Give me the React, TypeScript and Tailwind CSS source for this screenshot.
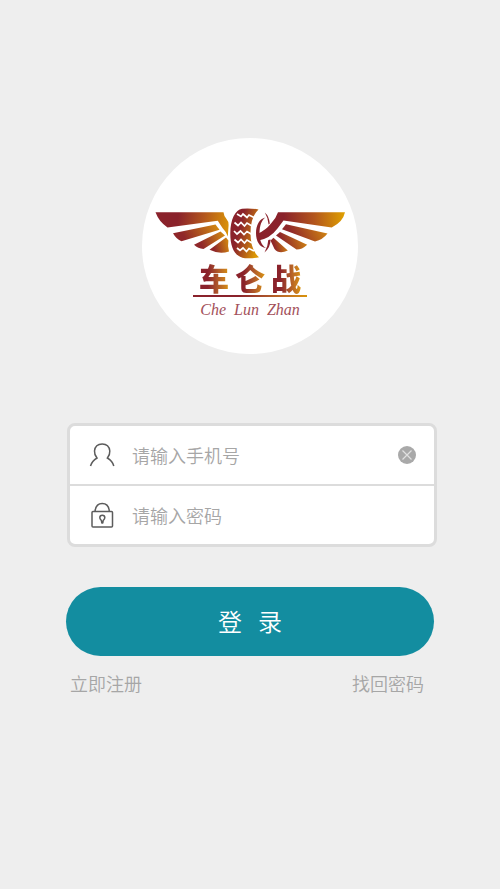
import React, { useState } from 'react';

const WingLogo: React.FC = () => (
  <svg viewBox="154 206 193 54" className="h-[54px] w-[193px]" aria-hidden="true">
    <defs>
      <linearGradient id="leftWing" gradientUnits="userSpaceOnUse" x1="156" y1="215" x2="229" y2="225">
        <stop offset="0.3" stopColor="#8a222b" />
        <stop offset="0.65" stopColor="#b3561d" />
        <stop offset="1" stopColor="#da9308" />
      </linearGradient>
      <linearGradient id="feather" x1="0" y1="0.6" x2="1" y2="0.4">
        <stop offset="0.2" stopColor="#8f272a" />
        <stop offset="1" stopColor="#d18611" />
      </linearGradient>
      <linearGradient id="tyre" gradientUnits="userSpaceOnUse" x1="231" y1="230" x2="260" y2="238">
        <stop offset="0.25" stopColor="#8a222b" />
        <stop offset="1" stopColor="#dc9805" />
      </linearGradient>
      <linearGradient id="rightWing" gradientUnits="userSpaceOnUse" x1="258" y1="225" x2="345" y2="218">
        <stop offset="0.3" stopColor="#8a222b" />
        <stop offset="0.65" stopColor="#b3561d" />
        <stop offset="1" stopColor="#dfa000" />
      </linearGradient>
    </defs>

    {/* left wing */}
    <path
      fill="url(#leftWing)"
      d="M155.5 212.3H223.5Q223.8 216 226.5 219Q228.8 221.5 228.6 225L227.8 236.5Q226.5 232 222.5 228L217.8 220.8L167.5 227.4Q159 222 155.5 212.3Z"
    />
    <path fill="url(#feather)" d="M173 233.3L215.5 224.4L219.5 229.8L181.5 241.2Q176.5 239.5 173 233.3Z" />
    <path fill="url(#feather)" d="M194 244.8L220.5 231.4L225 235.6L203.5 249Q198 248.5 194 244.8Z" />
    <path fill="url(#feather)" d="M209.5 249.8L226 237.5L228.4 240.5Q227.4 246 229 251.5Q219 254.5 209.5 249.8Z" />

    {/* tyre with its tread */}
    <path
      fill="url(#tyre)"
      d="M258.5 209.5Q250.5 217 250.5 233Q250.5 250 259 257.2Q252 258.8 245 258.2C235 257 230.3 248 230.3 233.5C230.3 219 235.5 210 242 208.8Q250 208 258.5 209.5Z"
    />
    <g fill="none" stroke="#fff" strokeWidth="1.7">
      <path d="M237 214L241 216.5L243 214L247 217.5L249 215L254 217.5" />
      <path d="M234.500 222.500L238 225.500L241 222.500L244.500 226L247 223L252 226" />
      <path d="M234 231L237 234L240.500 231L244 234.500L247 231.500L252 234.500" />
      <path d="M234.500 239.500L238 242.500L241 239.500L244.500 243L247 240L252 243" />
      <path d="M237 248L240 250.500L243 248L246.500 251.500L249 248.500L254 251" />
    </g>

    {/* rim and the thin outer edge */}
    <path
      fill="#8a222b"
      d="M265.500 217.500C259.500 218.500 256 225.500 256 233C256 241 259.500 247.500 266 248C261.500 245.500 259.500 240 259.500 233C259.500 226 261.500 220 265.500 217.500Z"
    />
    <path
      fill="#8a222b"
      d="M264.800 212.500Q269 216 269.800 223.500L268.600 224.500Q268 217.500 264.800 212.500ZM268.300 240L270.600 239.500Q270.500 247.500 264.500 252.500Q268 246.500 268.300 240Z"
    />

    {/* right wing, its root is a spoke of the rim */}
    <path
      fill="url(#rightWing)"
      d="M278 212.300H345Q343 222 331.700 227.500L283.500 220.600L277.500 228.500Q270 238.500 258.500 240.500L258 233.500Q266 230 271 223.500Q276 218.500 278 212.300Z"
    />
    <path fill="url(#feather)" d="M286 224.200L327.500 233.500Q323 239.500 315 241.500L282 229.300Z" />
    <path fill="url(#feather)" d="M280 232L307.200 244.700Q302 249.500 296.500 249.600L276 235.500Z" />
    <path fill="url(#feather)" d="M273.500 237.700L287.800 250.500Q279 254.500 274.500 249L270.500 240.500Z" />
  </svg>
);

const UserIcon: React.FC = () => (
  <svg viewBox="0 0 26 26" className="size-[26px] shrink-0" fill="none" stroke="#5c5c5c" strokeWidth="1.5" aria-hidden="true">
    <path d="M1.500 24Q3 19 8 16C6 13.500 5.300 11.500 5.500 9C6 4.500 9 2 13.200 2S20.300 4.500 20.800 9C21 11.500 20.400 13.500 18.400 16Q23.500 19 24.800 24" />
  </svg>
);

const LockIcon: React.FC = () => (
  <svg viewBox="0 0 26 26" className="size-[26px] shrink-0" fill="none" stroke="#5c5c5c" strokeWidth="1.5" aria-hidden="true">
    <rect x="3" y="9.500" width="20.500" height="15.500" rx="1" />
    <path d="M6 9.500C6.500 4.500 9.200 1.500 13.200 1.500S20 4.500 20.300 9.500" />
    <path strokeLinejoin="round" d="M12.400 18.500Q10.800 16.800 10.800 15.800A2.500 2.500 0 0 1 15.800 15.800Q15.800 16.800 14.200 18.500L13.800 21H12.800Z" />
  </svg>
);

const App: React.FC = () => {
  const [phone, setPhone] = useState('');
  const [password, setPassword] = useState('');

  return (
    <div className="min-h-screen bg-[#eeeeee] px-[66px] pt-[138px] font-['Noto_Sans_CJK_SC',sans-serif] font-[350]">
      <div className="mx-auto flex size-[216px] flex-col items-center rounded-full bg-white pt-[68px]">
        <WingLogo />
        <h1 className="flex gap-1.5 text-[30px] leading-[35px] font-black">
          <span className="bg-linear-to-r from-[#8a222b] from-30% to-[#d99308] bg-clip-text text-transparent">车</span>
          <span className="bg-linear-to-r from-[#8a222b] from-30% to-[#d99308] bg-clip-text text-transparent">仑</span>
          <span className="bg-linear-to-r from-[#8a222b] from-30% to-[#d99308] bg-clip-text text-transparent">战</span>
        </h1>
        <div className="h-0.5 w-[114px] bg-linear-to-r from-[#8a222b] from-40% to-[#d99308]" />
        <p className="mt-1 flex gap-2 font-['Liberation_Serif',serif] text-[16px] leading-[18px] font-normal text-[#a3505a] italic">
          <span>Che</span>
          <span>Lun</span>
          <span>Zhan</span>
        </p>
      </div>

      <form onSubmit={(e) => e.preventDefault()}>
        <div className="mt-[69px] -mr-[3px] ml-px rounded-lg border-3 border-[#dcdcdc] bg-white">
          <label className="flex h-[60px] items-center gap-[17px] border-b-2 border-[#dcdcdc] pr-[18px] pl-[19px]">
            <UserIcon />
            <input
              type="tel"
              value={phone}
              onChange={(e) => setPhone(e.target.value)}
              placeholder="请输入手机号"
              aria-label="手机号"
              className="min-w-0 flex-1 text-[18px] text-[#555555] outline-none placeholder:text-[#a6a6a6]"
            />
            <button
              type="button"
              aria-label="清除"
              onClick={() => setPhone('')}
              className="flex size-[18px] items-center justify-center rounded-full bg-[#a9a9a9]"
            >
              <svg viewBox="0 0 18 18" className="size-[18px]" stroke="#e0e0e0" strokeWidth="1.2" aria-hidden="true">
                <path d="M4.500 4.500L13.500 13.500M13.500 4.500L4.500 13.500" />
              </svg>
            </button>
          </label>
          <label className="flex h-[58px] items-center gap-[17px] pr-[18px] pl-[19px]">
            <LockIcon />
            <input
              type="password"
              value={password}
              onChange={(e) => setPassword(e.target.value)}
              placeholder="请输入密码"
              aria-label="密码"
              className="min-w-0 flex-1 text-[18px] text-[#555555] outline-none placeholder:text-[#a6a6a6]"
            />
          </label>
        </div>

        <button type="submit" className="mt-10 h-[69px] w-full rounded-full bg-[#138da0] pb-0.5 text-[24px] text-white">
          登&nbsp;&nbsp;&nbsp;录
        </button>
      </form>

      <div className="mt-[15px] flex justify-between pr-2.5 pl-1 text-[18px] leading-6 text-[#a6a6a6]">
        <a href="#register">立即注册</a>
        <a href="#reset">找回密码</a>
      </div>
    </div>
  );
};

export default App;
